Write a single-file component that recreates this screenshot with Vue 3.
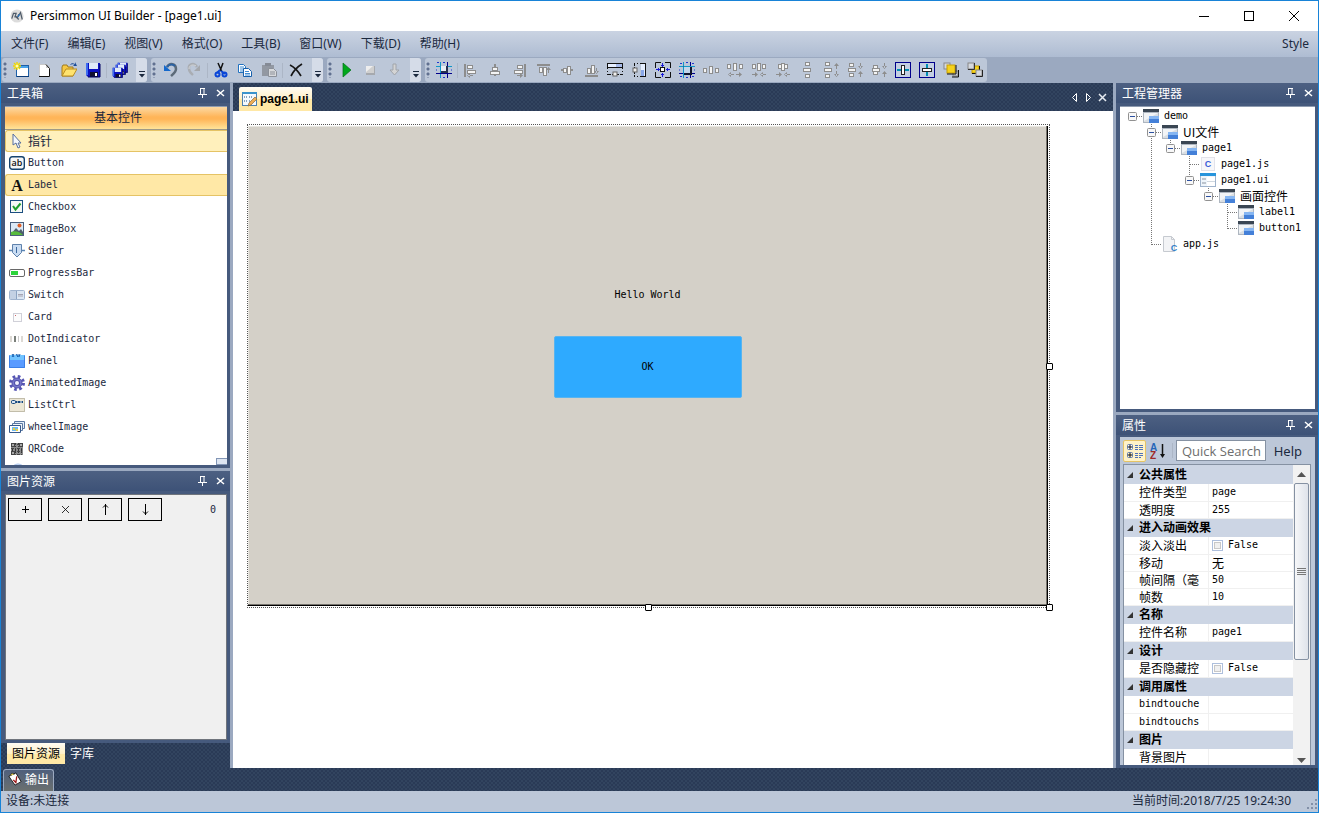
<script setup>
const menus = ['文件(F)', '编辑(E)', '视图(V)', '格式(O)', '工具(B)', '窗口(W)', '下载(D)', '帮助(H)']

const floppy = '<path d="M1 1h14v14H3l-2-2z" fill="#0a10c0"/><path d="M1 1h2v12l-2 0z" fill="#3c6cf0"/><path d="M4 1h9v6H4z" fill="#dfeaf8"/><path d="M5 10h8v5H5z" fill="#101030"/><path d="M10 11h2v3h-2z" fill="#fff"/><path d="M15 2v13H3" fill="none" stroke="#000060"/>'
const g = '#8d8d8d'
const bar = (x, y, w, h) => `<rect x="${x}.5" y="${y}.5" width="${w - 1}" height="${h - 1}" fill="#f4f4f4" stroke="${g}"/>`
const arrR = (x, y) => `<path d="M${x} ${y}h5v1h-5zM${x + 3} ${y - 2}l3 2.5l-3 2.5z" fill="${g}"/>`
const arrL = (x, y) => `<path d="M${x + 1} ${y}h5v1h-5zM${x + 3} ${y - 2}l-3 2.5l3 2.5z" fill="${g}"/>`
const arrU = (x, y) => `<path d="M${x} ${y + 1}h1v5h-1zM${x - 2} ${y + 3}l2.5-3l2.5 3z" fill="${g}"/>`
const arrD = (x, y) => `<path d="M${x} ${y}h1v5h-1zM${x - 2} ${y + 3}l2.5 3l2.5-3z" fill="${g}"/>`
const grid = '<path d="M4.500 0v16M0 4.500h16" stroke="#1196c8"/><path d="M11.500 0v16M0 11.500h16" stroke="#00008b"/>'

const icons = {
  newProject: '<rect x="3.500" y="3.500" width="12" height="11" fill="#fff" stroke="#1c5fa8"/><path d="M4 4h11v2H4z" fill="#49a3ea"/><path d="M4 14h12v1H4z" fill="#0c3c78"/><path d="M4 0v8M0 4h8M1 1l6 6M7 1L1 7" stroke="#f0d800" stroke-width="1.400"/><circle cx="4" cy="4" r="1.500" fill="#fffbb0"/>',
  newFile: '<path d="M3 2h6l4 4v9H3z" fill="#fff"/><path d="M2.500 15V2.500H9" fill="none" stroke="#c8c8c8"/><path d="M9 2l4 4H9z" fill="#ccc"/><path d="M9 2.500l3.500 4V14.500H2" fill="none" stroke="#111"/>',
  open: '<path d="M1 5l1-2h4l1 2h5v9H1z" fill="#f6c945" stroke="#a07a1e"/><path d="M1 14l4-7h11l-4 7z" fill="#ffe36e" stroke="#b88c22"/><path d="M9 3c1-2 3-2 5-1V0l2 4h-4l1.500-1.500C12 2 10 2 9 3z" fill="#1a4c9a"/>',
  save: floppy,
  saveAll: `<g transform="translate(5 0) scale(.7)">${floppy}</g><g transform="translate(3 2) scale(.7)">${floppy}</g><g transform="translate(0 5) scale(.7)">${floppy}</g>`,
  undo: '<path d="M5 5c3-5 9-3 9 2c0 3-3 5-5 7" fill="none" stroke="#5c6a78" stroke-width="2.500"/><path d="M2 3v6h7z" fill="#1468cc"/><path d="M5 5c2-3 6-3 8-1" fill="none" stroke="#2a62a4" stroke-width="2"/>',
  redo: '<path d="M11 5C8 0 2 2 3 7c0 3 3 5 4 6" fill="none" stroke="#a9adb3" stroke-width="2.500"/><path d="M14 3v6H8z" fill="#a4a7ac"/><path d="M3 7c0-4 4-5 7-3" fill="none" stroke="#d4d6d9"/>',
  cut: '<path d="M5 1l4 9M10 1L7 9" stroke="#111" stroke-width="1.500"/><path d="M7 8l-3 3M8 9l4 3" stroke="#0a46d8" stroke-width="2"/><circle cx="4.500" cy="12.500" r="2" fill="none" stroke="#0a46d8" stroke-width="2"/><circle cx="11.500" cy="12.500" r="2" fill="none" stroke="#0a46d8" stroke-width="2"/>',
  copy: '<path d="M1.500 2.500h5l2 2v6h-7z" fill="#fff" stroke="#2272c0"/><path d="M3 5h4M3 7h4M3 9h3" stroke="#3f8cd4"/><path d="M6.500 6.500h5l3 3v5h-8z" fill="#fff" stroke="#1760ac"/><path d="M8 9.500h4M8 11.500h5M8 13h5" stroke="#3f8cd4"/>',
  paste: '<path d="M1 3h12v11H1z" fill="#9298a2"/><path d="M4 1h6v3H4z" fill="#858b96"/><path d="M7.500 6.500h5l3 3v5h-8z" fill="#d7d9dc" stroke="#8b9099"/><path d="M9 10h5M9 12h5" stroke="#8b9099"/>',
  remove: '<path d="M2 3c4 2 8 6 11 11M14 2C9 5 5 10 3 14" fill="none" stroke="#161616" stroke-width="1.700"/>',
  play: '<path d="M5 1l8 7l-8 7z" fill="#00a81c" stroke="#047018" stroke-width=".7"/>',
  stop: '<rect x="4" y="4" width="9" height="9" fill="#a6a9ae"/><path d="M4 4h8v7H4z" fill="#cfcfcf"/><path d="M4 4h7L4 10z" fill="#eee"/>',
  down: '<path d="M7 2h3v6h3l-4.500 5L4 8h3z" fill="#d4d4d4" stroke="#a0a4aa"/>',
  alignGrid: `${grid}<rect x="5" y="4" width="7" height="7" fill="#27314f"/><rect x="5" y="4" width="5" height="5" fill="#e9eef5"/><path d="M1 .5h2M7 .5h2M0 8h1M15 8h1M7 15.500h2" stroke="#1d35d0"/>`,
  alignLeft: `<path d="M1 2h2v13H1z" fill="${g}"/>${bar(4, 3, 6, 4)}${bar(4, 8, 9, 4)}${arrL(4, 13)}`,
  alignCenter: `<path d="M8 2v12" stroke="${g}" stroke-width="2"/>${bar(5, 5, 6, 4)}${bar(3, 9, 10, 4)}`,
  alignRight: `<path d="M13 2h2v13h-2z" fill="${g}"/>${bar(6, 3, 6, 4)}${bar(3, 8, 9, 4)}${arrR(6, 13)}`,
  alignTop: `<path d="M2 2h13v2H2z" fill="${g}"/>${bar(4, 5, 4, 6)}${bar(8, 5, 4, 9)}${arrU(13, 5)}`,
  alignMiddle: `<path d="M2 8h12" stroke="${g}" stroke-width="2"/>${bar(4, 6, 4, 5)}${bar(8, 4, 4, 9)}`,
  alignBottom: `<path d="M2 13h13v2H2z" fill="${g}"/>${bar(4, 6, 4, 6)}${bar(8, 3, 4, 9)}${arrD(13, 6)}`,
  sameWidth: '<path d="M0 1h16v5H0z" fill="#111"/><path d="M1 2h14v3H1z" fill="#e6efff"/><path d="M9 2h6v3H9z" fill="#a8bcec"/><path d="M.5 6v7M15.500 6v7" stroke="#111" stroke-dasharray="1 2"/><path d="M1 12.500h14" stroke="#111" stroke-dasharray="3 1"/><rect x="6" y="10" width="4" height="4" fill="#eee" stroke="#666"/>',
  sameHeight: '<path d="M10 1h5v14h-5z" fill="#111"/><path d="M10 2h4v12h-4z" fill="#e6efff"/><path d="M10 8h3v6h-3z" fill="#8aa8e8"/><path d="M3 1.500h7M3 14.500h7" stroke="#111" stroke-dasharray="1 2"/><path d="M3.500 1v14" stroke="#111" stroke-dasharray="3 1"/><rect x="2" y="6" width="4" height="4" fill="#eee" stroke="#666"/>',
  sameSize: '<path d="M.5 6V.5H6M10 .5h5.500V6M15.500 10v5.500H10M6 15.500H.5V10" fill="none" stroke="#111"/><rect x="5.500" y="5.500" width="4" height="4" fill="#fff" stroke="#111"/><path d="M7.500 1v4M6 3.500h3M7.500 11v4M6 12.500h3M1 7.500h4M3.500 6v3M11 7.500h4M12.500 6v3" stroke="#1818d8"/>',
  sizeGrid: `${grid}<rect x="4" y="4" width="9" height="9" fill="#10162c"/><rect x="5" y="5" width="6" height="6" fill="#c3d6ea"/><path d="M4.500 13V4.500H13" fill="none" stroke="#1196c8"/><path d="M1 1.500h2M7 .5h2M13 1.500h2M0 8h1M15 8h1M1 14.500h2M7 15.500h2M13 14.500h2" stroke="#1d35d0"/>`,
  hEqual: `${bar(0, 6, 4, 5)}${bar(6, 4, 4, 8)}${bar(12, 6, 4, 5)}`,
  hMore: `${bar(0, 2, 4, 5)}${bar(6, 1, 4, 8)}${bar(12, 2, 4, 5)}${arrL(1, 12)}${arrR(9, 12)}`,
  hLess: `${bar(1, 2, 4, 5)}${bar(6, 1, 4, 8)}${bar(11, 2, 4, 5)}${arrR(1, 12)}${arrL(9, 12)}`,
  hNone: `${bar(3, 2, 4, 5)}${bar(6, 1, 4, 8)}${bar(9, 2, 4, 5)}${arrR(1, 12)}${arrL(9, 12)}`,
  vEqual: `${bar(6, 0, 5, 4)}${bar(4, 6, 8, 4)}${bar(6, 12, 5, 4)}`,
  vMore: `${bar(2, 0, 5, 4)}${bar(1, 6, 8, 4)}${bar(2, 12, 5, 4)}${arrU(13, 1)}${arrD(13, 9)}`,
  vLess: `${bar(2, 1, 5, 4)}${bar(1, 6, 8, 4)}${bar(2, 11, 5, 4)}${arrD(13, 1)}${arrU(13, 9)}`,
  vNone: `${bar(2, 3, 5, 4)}${bar(1, 6, 8, 4)}${bar(2, 9, 5, 4)}${arrD(13, 1)}${arrU(13, 9)}`,
  centerH: '<rect x=".5" y=".5" width="15" height="15" fill="#c3cfe2" stroke="#00008b"/><path d="M2 8h4M10 8h4" stroke="#008eb4" stroke-width="2"/><rect x="6.500" y="3.500" width="3" height="9" fill="#fff" stroke="#222"/>',
  centerV: '<rect x=".5" y=".5" width="15" height="15" fill="#c3cfe2" stroke="#00008b"/><path d="M8 2v4M8 10v4" stroke="#008eb4" stroke-width="2"/><rect x="3.500" y="6.500" width="9" height="3" fill="#fff" stroke="#222"/>',
  toFront: '<rect x="1" y="1" width="6" height="6" fill="#d5d8de" stroke="#888"/><rect x="10" y="9" width="5" height="5" fill="#c5cad2" stroke="#888"/><path d="M9 15h6.500V8" fill="none" stroke="#111"/><rect x="4" y="3" width="8" height="8" fill="#f5d21c" stroke="#c9a000"/><path d="M4 12h9V3" fill="none" stroke="#111"/>',
  toBack: '<rect x="5" y="4" width="7" height="7" fill="#f5d21c" stroke="#c9a000"/><path d="M5 11.500h7.500V4" fill="none" stroke="#111"/><rect x="1" y="1" width="6" height="6" fill="#d5d8de" stroke="#888"/><path d="M1 7.500h6.500V1" fill="none" stroke="#333"/><rect x="9" y="8" width="6" height="6" fill="#d5d8de" stroke="#888"/><path d="M9 14.500h6.500V8" fill="none" stroke="#222"/>',

  pointer: '<path d="M4 1v11l3-2l2 5l2-1l-2-4h3z" fill="#f4f8fd" stroke="#566f9e"/>',
  button: '<rect x=".7" y="1.700" width="14.600" height="12.600" rx="2.500" fill="#f7f7f7" stroke="#16436f" stroke-width="1.400"/><text x="8" y="11" text-anchor="middle" font-family="Open Sans" font-size="9" font-weight="600" fill="#111">ab</text>',
  label: '<text x="8" y="14" text-anchor="middle" font-family="Liberation Serif" font-size="16" font-weight="bold" fill="#111">A</text>',
  checkbox: '<rect x="1.500" y="1.500" width="12" height="12" fill="#f5f9f5" stroke="#1c4f80"/><path d="M4 7l2.500 3.500l5-6" fill="none" stroke="#1ea02a" stroke-width="2"/>',
  image: '<rect x="1.500" y="1.500" width="13" height="13" fill="#dce9f6" stroke="#4a5f7c"/><path d="M2 13l5-6l3 3l2-2l2 3v3H2z" fill="#4f5f6c"/><path d="M2 11c4-2 9 0 12 3H2z" fill="#57bb3d"/><circle cx="10.500" cy="4.500" r="2" fill="#e06028"/>',
  slider: '<path d="M0 7.500h16" stroke="#5784b4" stroke-width="1.500"/><path d="M3.500 1.500h9v8L8 14l-4.500-4.500z" fill="#c9dcf2" stroke="#5f82ac"/><path d="M7.500 4v6" stroke="#3d6aa0"/>',
  progress: '<rect x=".5" y="4.500" width="15" height="7" rx="1.500" fill="#fff" stroke="#686868"/><path d="M2 6h7v4H2z" fill="#2cd43a"/>',
  switch: '<rect x=".5" y="3.500" width="15" height="9" rx="1" fill="#dbe6f3" stroke="#a0b4cf"/><path d="M1 4h6v8H1z" fill="#c3d1e4"/><path d="M7.500 4v8" stroke="#8ba3c2"/><path d="M9 7.500h5M9 9h5" stroke="#a5a5b4"/>',
  card: '<rect x="4.500" y="4.500" width="8" height="8" fill="#fcfcfc" stroke="#d0d0d8"/><path d="M6 6h1v1H6z" fill="#cf6666"/>',
  dots: '<path d="M1 5h2v6H1zM12 5h2v6h-2z" fill="#dcd9d4"/><path d="M5 5h2v6H5z" fill="#7a7f7a"/><path d="M9 5h1v6H9z" fill="#ccc"/>',
  panel: '<path d="M0 3h16v12H0z" fill="#5a9bff"/><path d="M0 2h16v5H0z" fill="#72c4ff"/><path d="M3 1l2 3M5 1L3 4M7 1l2 3M9 1v3M11 1l-1 3" stroke="#165fae"/><path d="M.5 2.500v12h15v-12" fill="none" stroke="#3c80e6"/>',
  gear: '<circle cx="8" cy="8" r="6.500" fill="none" stroke="#5656b4" stroke-width="3" stroke-dasharray="2.600 2.500"/><circle cx="8" cy="8" r="5" fill="#7676cc" stroke="#5050a8"/><circle cx="8" cy="8" r="3" fill="#5050a8"/><circle cx="8" cy="8" r="2" fill="#f2f2ff"/>',
  list: '<rect x=".5" y="1.500" width="15" height="13" fill="#ece7d6" stroke="#8f866a" stroke-dasharray="1 1"/><path d="M2 5h12" stroke="#17497e" stroke-width="2"/><rect x="2.500" y="3.500" width="4" height="3" rx="1" fill="#d8e4f2" stroke="#17497e"/><path d="M8 5h1M11 5h2" stroke="#fff"/>',
  wheel: '<path d="M5.500 2.500h10v7h-10z" fill="#e6effa" stroke="#5a78a2"/><path d="M3.500 4.500h10v7h-10z" fill="#f0f5fb" stroke="#5a78a2"/><path d="M.5 6.500h11v7H.5z" fill="#fff" stroke="#36598a"/><path d="M3 8h6v4H3z" fill="#71b8ee"/><path d="M4 9h2v2H4zM7 10h2v2H7z" fill="#e8d23c"/>',
  qr: '<rect x="2" y="2" width="12" height="12" fill="#8b8b8b"/><path d="M3.500 2v12M6.500 2v12M9.500 2v12M12.500 2v12" stroke="#333" stroke-dasharray="2 1 1 2"/><path d="M2 3.500h12M2 7.500h12M2 10.500h12M2 13.500h12" stroke="#444" stroke-dasharray="3 1 1 1"/><path d="M2 2h4v4H2zM10 2h4v4h-4zM2 10h4v4H2z" fill="#444"/><path d="M3 3h2v2H3zM11 3h2v2h-2zM3 11h2v2H3z" fill="#aaa"/>',
  circle: '<circle cx="9" cy="8" r="7" fill="#dde8fb" stroke="#a9c2ea"/>',

  folder: '<path d="M0 1h16v14H0z" fill="#aeb6c0"/><path d="M1 5h14v9H1z" fill="#d9dee3"/><path d="M1 5h14L1 13z" fill="#f2f4f6"/><path d="M0 1h16v3H0z" fill="#3a4653"/><path d="M6 8h10v7H6z" fill="#4480d8"/><path d="M6 8h10v3H6z" fill="#86b6f2"/>',
  jsFile: '<rect x="1.500" y="1.500" width="13" height="13" fill="#f7f7fa" stroke="#e2e2ea"/><text x="8" y="11" text-anchor="middle" font-family="Liberation Sans" font-size="9" font-weight="bold" fill="#3a5ed8">C</text>',
  uiFile: '<rect x=".5" y="1.500" width="15" height="13" fill="#eef5fb" stroke="#9fb3cc"/><path d="M0 1h16v3H0z" fill="#2794dc"/><path d="M2 6h4v2H2zM2 10h4v2H2z" fill="#bcc4cd"/><path d="M7 5h8v4H7zM7 10h8v4H7z" fill="#fff"/><path d="M7 9.500h8" stroke="#d0d8e0"/>',
  appFile: '<path d="M1.500 .5h8l3 3v12h-11z" fill="#f3f4f6" stroke="#c6cad0"/><path d="M9.500 .5v3h3" fill="none" stroke="#c6cad0"/><text x="12" y="15" text-anchor="middle" font-family="Liberation Sans" font-size="9" font-weight="bold" fill="#2f7fc8">C</text>',
  form: '<rect x=".5" y="1.500" width="14" height="13" fill="#f4f9fd" stroke="#4f81ad"/><path d="M0 1h15v2H0z" fill="#3a93cc"/><path d="M2 6h3M2 10h3M7 6h4M7 10h2" stroke="#6487a8" stroke-width="1.500" stroke-dasharray="1 1"/><path d="M7 12l6-6l2 2l-6 6l-3 1z" fill="#efad56" stroke="#8b6b3a" stroke-width=".7"/>',
  output: '<path d="M1 5l8-4l6 10l-7 4z" fill="#fff" stroke="#111"/><path d="M2 4l3-3l2 2" fill="#e8d24c" stroke="#333"/><path d="M6 9l3 3l1-7" fill="none" stroke="#9c1616" stroke-width="1.500"/>',
  categorized: '<rect x=".5" y="1.500" width="5" height="5" rx="1" fill="#fff" stroke="#5f7aa8"/><path d="M1 4h4M3 2v4M1 12h4M3 10v4" stroke="#111"/><rect x=".5" y="9.500" width="5" height="5" rx="1" fill="none" stroke="#5f7aa8"/><path d="M8 2.500h3M12 2.500h4M8 4.500h3M12 4.500h4M8 6.500h3M12 6.500h4M8 10.500h3M12 10.500h4M8 12.500h3M12 12.500h4M8 14.500h3M12 14.500h2" stroke="#4d72ba"/>',
  sort: '<text x="0" y="8" font-family="Liberation Sans" font-size="10" font-weight="bold" fill="#2565b8">A</text><text x="0" y="16" font-family="Liberation Sans" font-size="10" font-weight="bold" fill="#9e2a2a">Z</text><path d="M12.500 1v12" stroke="#111" stroke-width="1.500"/><path d="M10 11h5l-2.500 4z" fill="#111"/>'
}

const toolbars = [
  { name: '文件', items: ['newProject', 'newFile', 'open', 'save', '|', 'saveAll'], more: true },
  { name: '编辑', items: ['undo', 'redo', '|', 'cut', 'copy', 'paste', '|', 'remove'], more: true },
  { name: '下载', items: ['play', 'stop', 'down'], more: true },
  {
    name: '格式',
    items: ['alignGrid', '|', 'alignLeft', 'alignCenter', 'alignRight', 'alignTop', 'alignMiddle', 'alignBottom', 'sameWidth', 'sameHeight', 'sameSize', 'sizeGrid', 'hEqual', 'hMore', 'hLess', 'hNone', 'vEqual', 'vMore', 'vLess', 'vNone', 'centerH', 'centerV', 'toFront', 'toBack']
  }
]

const widgets = [
  ['pointer', '指针'], ['button', 'Button'], ['label', 'Label'], ['checkbox', 'Checkbox'], ['image', 'ImageBox'],
  ['slider', 'Slider'], ['progress', 'ProgressBar'], ['switch', 'Switch'], ['card', 'Card'], ['dots', 'DotIndicator'],
  ['panel', 'Panel'], ['gear', 'AnimatedImage'], ['list', 'ListCtrl'], ['wheel', 'wheelImage'], ['qr', 'QRCode'], ['circle', 'Circle']
]

// Guides: "." blank, "|" line, "T" branch, "L" last branch, "R" root box, "B" box with a sibling below, "E" last box
const tree = [
  ['R', 'folder', 'demo'], ['.B', 'folder', 'UI文件'], ['.|E', 'folder', 'page1'], ['.|.T', 'jsFile', 'page1.js'],
  ['.|.E', 'uiFile', 'page1.ui'], ['.|..E', 'folder', '画面控件'], ['.|...T', 'folder', 'label1'],
  ['.|...L', 'folder', 'button1'], ['.L', 'appFile', 'app.js']
]
const guides = {
  '|': 'M9.500 0v16', T: 'M9.500 0v16M10 8.500h9', L: 'M9.500 0v9M10 8.500h9',
  R: 'M14 8.500h5', B: 'M9.500 0v16M14 8.500h5', E: 'M9.500 0v4M14 8.500h5'
}

const groups = [
  { title: '公共属性', rows: [['控件类型', 'page'], ['透明度', '255']] },
  { title: '进入动画效果', rows: [['淡入淡出', 'False', true], ['移动', '无'], ['帧间隔（毫', '50'], ['帧数', '10']] },
  { title: '名称', rows: [['控件名称', 'page1']] },
  { title: '设计', rows: [['是否隐藏控', 'False', true]] },
  { title: '调用属性', rows: [['bindtouche', ''], ['bindtouchs', '']] },
  { title: '图片', rows: [['背景图片', '']] }
]
const isCjk = (s) => /[\u4e00-\u9fff]/.test(s)
</script>

<template>
  <div class="window">
    <header class="titlebar">
      <svg class="app-icon" viewBox="0 0 16 16"><circle cx="8" cy="8" r="7.500" fill="#dcdcdc" /><path d="M2 11l2-6h3l-1 3l4 4M5 9h3M9 9l3-5l2 8M8 11l2-5" fill="none" stroke="#4e5a68" stroke-width="1.400" /><path d="M9 9l2-3" stroke="#2875c0" stroke-width="1.500" /></svg>
      <h1>Persimmon UI Builder - [page1.ui]</h1>
      <div class="window-buttons">
        <button aria-label="最小化"><svg viewBox="0 0 11 11"><path d="M0 5.500h10" stroke="#000" /></svg></button>
        <button aria-label="最大化"><svg viewBox="0 0 11 11"><rect x=".5" y=".5" width="9" height="9" fill="none" stroke="#000" /></svg></button>
        <button aria-label="关闭"><svg viewBox="0 0 11 11"><path d="M0 0l10 10M10 0L0 10" stroke="#000" /></svg></button>
      </div>
    </header>

    <nav class="menubar">
      <button v-for="m in menus" :key="m">{{ m }}</button>
      <button class="style-menu">Style</button>
    </nav>

    <div class="toolbars">
      <div v-for="t in toolbars" :key="t.name" class="toolbar" role="toolbar" :aria-label="t.name">
        <i class="grip"></i>
        <template v-for="(name, i) in t.items" :key="i">
          <i v-if="name === '|'" class="sep"></i>
          <button v-else class="tool" :aria-label="name"><svg viewBox="0 0 16 16" v-html="icons[name]" /></button>
        </template>
        <button v-if="t.more" class="more" aria-label="更多"><svg viewBox="0 0 6 7"><path d="M0 .5h6" stroke="#1b293e" /><path d="M0 3h6L3 6.500z" fill="#1b293e" /></svg></button>
      </div>
    </div>

    <main class="workspace">
      <aside class="left">
        <section class="panel toolbox">
          <header class="panel-head">
            <h2>工具箱</h2>
            <button aria-label="固定"><svg viewBox="0 0 9 10"><path d="M2 .5h5M2.500 0v6M6 0v6M0 6.500h9M4.500 7v3" stroke="#fff" fill="none" /></svg></button>
            <button aria-label="关闭"><svg viewBox="0 0 9 10"><path d="M1 2l7 6M8 2L1 8" stroke="#fff" stroke-width="1.500" /></svg></button>
          </header>
          <div class="panel-body">
            <button class="category">基本控件</button>
            <ul class="widgets">
              <li v-for="([icon, name], i) in widgets" :key="name">
                <button :class="{ hot: i === 0, chosen: i === 2 }"><svg viewBox="0 0 16 16" v-html="icons[icon]" /><span :class="{ cjk: isCjk(name) }">{{ name }}</span></button>
              </li>
            </ul>
            <i class="scroll-hint"></i>
          </div>
        </section>

        <section class="panel resources">
          <header class="panel-head">
            <h2>图片资源</h2>
            <button aria-label="固定"><svg viewBox="0 0 9 10"><path d="M2 .5h5M2.500 0v6M6 0v6M0 6.500h9M4.500 7v3" stroke="#fff" fill="none" /></svg></button>
            <button aria-label="关闭"><svg viewBox="0 0 9 10"><path d="M1 2l7 6M8 2L1 8" stroke="#fff" stroke-width="1.500" /></svg></button>
          </header>
          <div class="panel-body grey">
            <div class="res-bar">
              <button aria-label="添加"><svg viewBox="0 0 9 11"><path d="M1 5.500h7M4.500 2v7" stroke="#000" /></svg></button>
              <button aria-label="删除"><svg viewBox="0 0 9 11"><path d="M1 2l7 7M8 2L1 9" stroke="#000" stroke-width=".8" /></svg></button>
              <button aria-label="上移"><svg viewBox="0 0 9 11"><path d="M4.500 0v11M2 3.500L4.500 1L7 3.500" fill="none" stroke="#000" /></svg></button>
              <button aria-label="下移"><svg viewBox="0 0 9 11"><path d="M4.500 0v11M2 7.500L4.500 10L7 7.500" fill="none" stroke="#000" /></svg></button>
              <span>0</span>
            </div>
          </div>
        </section>
        <div class="bottom-tabs">
          <button class="on">图片资源</button>
          <button>字库</button>
        </div>
      </aside>

      <section class="editor">
        <div class="doc-tabs">
          <button class="doc-tab"><svg viewBox="0 0 16 16" v-html="icons.form" />page1.ui</button>
          <div class="doc-nav">
            <button aria-label="上一个"><svg viewBox="0 0 9 9"><path d="M6.500 .5v8L2.500 4.500z" fill="none" stroke="#fff" /></svg></button>
            <button aria-label="下一个"><svg viewBox="0 0 9 9"><path d="M2.500 .5v8l4-4z" fill="none" stroke="#fff" /></svg></button>
            <button aria-label="关闭"><svg viewBox="0 0 9 9"><path d="M1 1l7 7M8 1L1 8" stroke="#e8ecf2" stroke-width="1.500" /></svg></button>
          </div>
        </div>
        <div class="surface">
          <div class="selection">
            <div class="page">
              <span class="hello">Hello World</span>
              <button class="ok">OK</button>
            </div>
            <i class="handle east"></i><i class="handle south"></i><i class="handle corner"></i>
          </div>
        </div>
      </section>

      <aside class="right">
        <section class="panel project">
          <header class="panel-head">
            <h2>工程管理器</h2>
            <button aria-label="固定"><svg viewBox="0 0 9 10"><path d="M2 .5h5M2.500 0v6M6 0v6M0 6.500h9M4.500 7v3" stroke="#fff" fill="none" /></svg></button>
            <button aria-label="关闭"><svg viewBox="0 0 9 10"><path d="M1 2l7 6M8 2L1 8" stroke="#fff" stroke-width="1.500" /></svg></button>
          </header>
          <div class="panel-body">
            <ul class="tree">
              <li v-for="[cells, icon, name] in tree" :key="name">
                <svg v-for="(c, i) in cells" :key="i" class="guide" viewBox="0 0 19 16">
                  <path v-if="guides[c]" :d="guides[c]" fill="none" stroke="#777" stroke-dasharray="1 1" />
                  <g v-if="'RBE'.includes(c)"><rect x="5.500" y="4.500" width="8" height="8" rx="1" fill="#f8f8f8" stroke="#919191" /><path d="M7 8.500h5" stroke="#2b4fa0" /></g>
                </svg>
                <svg class="node" viewBox="0 0 16 16" v-html="icons[icon]" />
                <span :class="{ cjk: isCjk(name) }">{{ name }}</span>
              </li>
            </ul>
          </div>
        </section>

        <section class="panel props">
          <header class="panel-head">
            <h2>属性</h2>
            <button aria-label="固定"><svg viewBox="0 0 9 10"><path d="M2 .5h5M2.500 0v6M6 0v6M0 6.500h9M4.500 7v3" stroke="#fff" fill="none" /></svg></button>
            <button aria-label="关闭"><svg viewBox="0 0 9 10"><path d="M1 2l7 6M8 2L1 8" stroke="#fff" stroke-width="1.500" /></svg></button>
          </header>
          <div class="prop-box">
            <div class="prop-bar">
              <button class="mode on" aria-label="分类"><svg viewBox="0 0 16 16" v-html="icons.categorized" /></button>
              <button class="mode" aria-label="排序"><svg viewBox="0 0 16 16" v-html="icons.sort" /></button>
              <i class="sep"></i>
              <input type="text" placeholder="Quick Search" aria-label="Quick Search">
              <button class="help">Help</button>
            </div>
            <div class="prop-grid">
              <table>
                <tbody v-for="grp in groups" :key="grp.title">
                  <tr class="group"><th colspan="2"><svg viewBox="0 0 6 6"><path d="M6 0v6H0z" fill="#333" /></svg>{{ grp.title }}</th></tr>
                  <tr v-for="[k, v, check] in grp.rows" :key="k">
                    <td :class="{ cjk: isCjk(k) }">{{ k }}</td>
                    <td :class="{ cjk: isCjk(v) }"><label v-if="check"><input type="checkbox">{{ v }}</label><template v-else>{{ v }}</template></td>
                  </tr>
                </tbody>
              </table>
              <div class="scrollbar">
                <button aria-label="向上"><svg viewBox="0 0 9 5"><path d="M0 5L4.500 0L9 5z" fill="#555" /></svg></button>
                <div class="thumb"><svg viewBox="0 0 9 7"><path d="M0 .5h9M0 2.500h9M0 4.500h9M0 6.500h9" stroke="#777" /></svg></div>
                <button aria-label="向下"><svg viewBox="0 0 9 5"><path d="M0 0h9L4.500 5z" fill="#555" /></svg></button>
              </div>
            </div>
          </div>
        </section>
      </aside>
    </main>

    <div class="dock">
      <button><svg viewBox="0 0 16 16" v-html="icons.output" />输出</button>
    </div>

    <footer class="status">
      <span>设备:未连接</span>
      <span class="clock">当前时间:2018/7/25 19:24:30</span>
      <svg viewBox="0 0 12 12"><path d="M9 1h2v2H9zM9 5h2v2H9zM5 5h2v2H5zM9 9h2v2H9zM5 9h2v2H5zM1 9h2v2H1z" fill="#8290a8" /></svg>
    </footer>
  </div>
</template>

<style>
html, body { margin: 0; }
</style>

<style scoped>
* { box-sizing: border-box; }
button { margin: 0; padding: 0; border: 0; background: none; font: inherit; color: inherit; display: flex; align-items: center; justify-content: center; }
h1, h2, ul { margin: 0; padding: 0; font-weight: normal; list-style: none; }
svg { display: block; flex: none; }
i { flex: none; }

.window { height: 100vh; display: flex; flex-direction: column; border: 1px solid #1883d7; overflow: hidden; background: #9ba9c0; color: #1b293e; font-family: "Noto Sans", "Noto Sans CJK SC", sans-serif; font-size: 12px; line-height: 16px; }

.titlebar { flex: none; height: 30px; background: #fff; display: flex; align-items: center; color: #000; padding-left: 9px; }
.app-icon { width: 14px; height: 14px; margin-right: 6px; }
.titlebar h1 { font-size: 12px; flex: 1; }
.window-buttons { display: flex; margin-right: 1px; }
.window-buttons button { width: 45px; height: 28px; }
.window-buttons svg { width: 11px; height: 11px; }

.menubar { flex: none; height: 26px; display: flex; align-items: center; gap: 19px; padding: 0 9px 0 10px; background: linear-gradient(#cad3e2, #aebcd2); }
.style-menu { margin-left: auto; }

.toolbars { flex: none; height: 26px; display: flex; gap: 4px; padding: 1px 0 1px 1px; }
.toolbar { display: flex; align-items: center; background: #bcc7d8; border-radius: 3px; overflow: hidden; }
.grip { width: 7px; height: 16px; background: radial-gradient(circle at 3px 2px, #607090 1px, transparent 2px) 0 0 / 7px 5px; }
.tool { width: 24px; height: 24px; }
.tool svg { width: 16px; height: 16px; }
.sep { width: 1px; height: 15px; margin: 0 1px; background: #acb6c6; }
.more { width: 11px; height: 24px; margin-left: 4px; padding-top: 8px; background: #d5dce8; }
.more svg { width: 6px; height: 7px; }

.workspace { flex: 1; min-height: 0; display: grid; grid-template-columns: 229px minmax(0, 1fr) 202px; gap: 3px; }
.left, .right { display: flex; flex-direction: column; min-height: 0; gap: 3px; }
.panel { display: flex; flex-direction: column; background: #465a7d; padding: 0 3px 3px 4px; min-height: 0; }
.toolbox { flex: 386 1 0; }
.resources { flex: 271 1 0; }
.project { flex: 329 1 0; }
.props { flex: 353 1 0; }
.panel-head { flex: none; display: flex; align-items: center; gap: 9px; height: 20px; margin: 0 -3px 3px -4px; padding: 0 5px 1px 6px; color: #fff; background: linear-gradient(#4d6082, #3d5277); }
.panel-head h2 { flex: 1; font-family: "Noto Sans CJK SC", sans-serif; font-size: 12px; }
.panel-head svg { width: 9px; height: 10px; }
.panel-body { flex: 1; min-height: 0; background: #fff; border-top: 1px solid #8e9bb0; overflow: hidden; position: relative; color: #1b293e; font-family: "DejaVu Sans Mono", "Noto Sans CJK SC", monospace; font-size: 10px; }
.panel-body.grey { background: #f0f0f0; border: 1px solid #6f747c; }
.cjk { font-family: "Noto Sans CJK SC", sans-serif; font-size: 12px; }
.category { width: 100%; height: 23px; padding: 0 0 2px 4px; border-bottom: 1px solid #a09a86; background: linear-gradient(#fcd9a4, #ffb558 45%, #ffb558 55%, #ffe399); font-family: "Noto Sans CJK SC", sans-serif; font-size: 12px; }
.widgets button { width: 100%; height: 22px; justify-content: flex-start; gap: 3px; padding-left: 3px; border: 1px solid transparent; border-right: 0; border-radius: 3px 0 0 3px; }
.widgets svg { width: 16px; height: 16px; }
.widgets .hot { background: #fff0bc; border-color: #e5c365; }
.widgets .chosen { background: #ffe8a6; border-color: #e5c365; }
.scroll-hint { position: absolute; right: 0; bottom: 0; width: 11px; height: 7px; border: 1px solid #8295b5; border-right: 0; background: linear-gradient(#dde5f1 5px, #2d3f5c 5px); }

.res-bar { display: flex; gap: 6px; padding: 3px 10px 0 2px; align-items: center; }
.res-bar button { width: 34px; height: 23px; border: 1px solid #000; }
.res-bar svg { width: 9px; height: 11px; }
.res-bar span { margin-left: auto; padding-top: 1px; }
.bottom-tabs, .doc-tabs, .dock { background-color: #2a3a56; background-image: radial-gradient(circle at 1px 1px, #32445f 1px, transparent 1px), radial-gradient(circle at 3px 3px, #32445f 1px, transparent 1px); background-size: 4px 4px; }
.bottom-tabs { flex: none; height: 25px; margin-top: -3px; padding: 0 6px 4px; display: flex; color: #fff; font-family: "Noto Sans CJK SC", sans-serif; }
.bottom-tabs button { padding: 0 5px 1px; }
.bottom-tabs .on { color: #000; background: linear-gradient(#fffcf3, #fff0c7 50%, #ffe8a6 52%); }

.editor { display: flex; flex-direction: column; min-width: 0; background: #fff; }
.doc-tabs { flex: none; height: 28px; display: flex; align-items: flex-end; padding-left: 6px; }
.doc-tab { height: 24px; padding: 0 3px 1px; gap: 2px; border-radius: 2px 2px 0 0; background: linear-gradient(#fffcf3, #fff0c7 50%, #ffe8a6 52%); color: #000; font-family: "Liberation Sans", sans-serif; font-weight: bold; font-size: 12px; }
.doc-tab svg { width: 16px; height: 16px; }
.doc-nav { margin: 0 6px 9px auto; display: flex; gap: 5px; }
.doc-nav svg { width: 9px; height: 9px; }
.surface { flex: 1; min-height: 0; overflow: hidden; padding: 13px 14px; }
.selection { position: relative; width: 803px; max-width: 100%; padding: 1px 1px 1px 0; border: 1px dotted #555; }
.page { aspect-ratio: 5 / 3; display: flex; flex-direction: column; align-items: center; gap: 33px; padding-top: 161px; background: #d4d0c8; border: solid #000; border-width: 0 1px 1px 0; box-shadow: inset -1px -1px #77746e, inset 1px 1px #e8e6e0; color: #000; font-family: "DejaVu Sans Mono", monospace; font-size: 10px; }
.ok { width: 188px; height: 62px; border-radius: 2px; background: #2eaaff; border: 1px solid #57b4f0; }
.handle { position: absolute; width: 7px; height: 7px; background: #fff; border: 1px solid #000; border-radius: 1px; }
.east { right: -4px; top: calc(50% - 3px); }
.south { left: calc(50% - 4px); bottom: -4px; }
.corner { right: -4px; bottom: -4px; }

.project .panel-body { color: #000; }
.tree { padding: 1px 0 0 3px; }
.tree li { display: flex; align-items: center; height: 16px; white-space: nowrap; }
.guide { width: 19px; height: 16px; }
.node { width: 16px; height: 16px; margin: 0 5px 0 1px; }

.prop-box { flex: 1; min-height: 0; display: flex; flex-direction: column; background: #bcc7d8; padding: 0 4px 0 3px; margin-top: -1px; }
.prop-bar { flex: none; display: flex; align-items: center; height: 27px; font-family: "Noto Sans", sans-serif; }
.mode { width: 23px; height: 22px; border: 1px solid transparent; border-radius: 2px; }
.mode.on { background: #fff3c8; border-color: #e5c365; }
.mode svg { width: 16px; height: 16px; }
.prop-bar .sep { margin: 0 3px; }
.prop-bar input { flex: 1; min-width: 0; height: 21px; margin-right: 8px; padding: 0 0 0 5px; border: 1px solid #8591a2; background: #fff; font: 13px "Open Sans", sans-serif; }
.prop-bar input::placeholder { color: #6d6d6d; opacity: 1; }
.help { margin-right: 9px; font-size: 13px; }
.prop-grid { flex: 1; min-height: 0; display: flex; overflow: hidden; background: #fff; border: 1px solid #8591a2; border-bottom: 0; }
table { flex: 1; width: 0; table-layout: fixed; border-collapse: collapse; align-self: flex-start; color: #000; font-family: "DejaVu Sans Mono", monospace; font-size: 10px; line-height: 16px; }
.group th { height: 19px; padding: 0 0 2px; background: #ccd5e4; text-align: left; font-family: "Noto Sans CJK SC", sans-serif; font-size: 12px; font-weight: bold; }
.group svg { display: inline-block; width: 6px; height: 6px; margin: 0 6px 1px 3px; }
td { height: 17px; padding: 0 0 0 3px; border-bottom: 1px solid #f0f0f0; white-space: nowrap; overflow: hidden; }
td:first-child { padding-left: 15px; width: 87px; border-right: 1px solid #f0f0f0; }
td label { display: flex; align-items: center; gap: 5px; }
td input { appearance: none; width: 11px; height: 11px; margin: 0; border: 1px solid #aebfdc; background: #f0f0f0; box-shadow: inset 0 0 0 1px #fff, inset 0 0 0 2px #c8c8c8; }
.scrollbar { flex: none; width: 17px; display: flex; flex-direction: column; background: #f2f2f2; }
.scrollbar button { height: 18px; flex: none; }
.scrollbar button svg { width: 9px; height: 5px; }
.scrollbar button:last-child { margin-top: auto; height: 9px; }
.thumb { flex: 0 0 59%; display: flex; align-items: center; justify-content: center; margin: 0 1px; border: 1px solid #8591a2; border-radius: 2px; background: linear-gradient(90deg, #f6f7f9, #dfe3ea); }
.thumb svg { width: 9px; height: 7px; }

.dock { flex: none; height: 23px; display: flex; padding: 1px 2px 0; color: #fff; font-family: "Noto Sans CJK SC", sans-serif; }
.dock button { gap: 3px; padding: 0 4px 3px; border: 1px solid #9ba9c0; border-bottom: 0; border-radius: 3px 3px 0 0; background: linear-gradient(#4f5f7c, #6b706f); }
.dock svg { width: 14px; height: 14px; }
.status { flex: none; height: 21px; display: flex; align-items: center; padding: 0 0 2px 5px; background: #bcc7d8; }
.clock { margin-left: auto; margin-right: 15px; }
.status svg { width: 12px; height: 12px; align-self: flex-end; }
</style>
